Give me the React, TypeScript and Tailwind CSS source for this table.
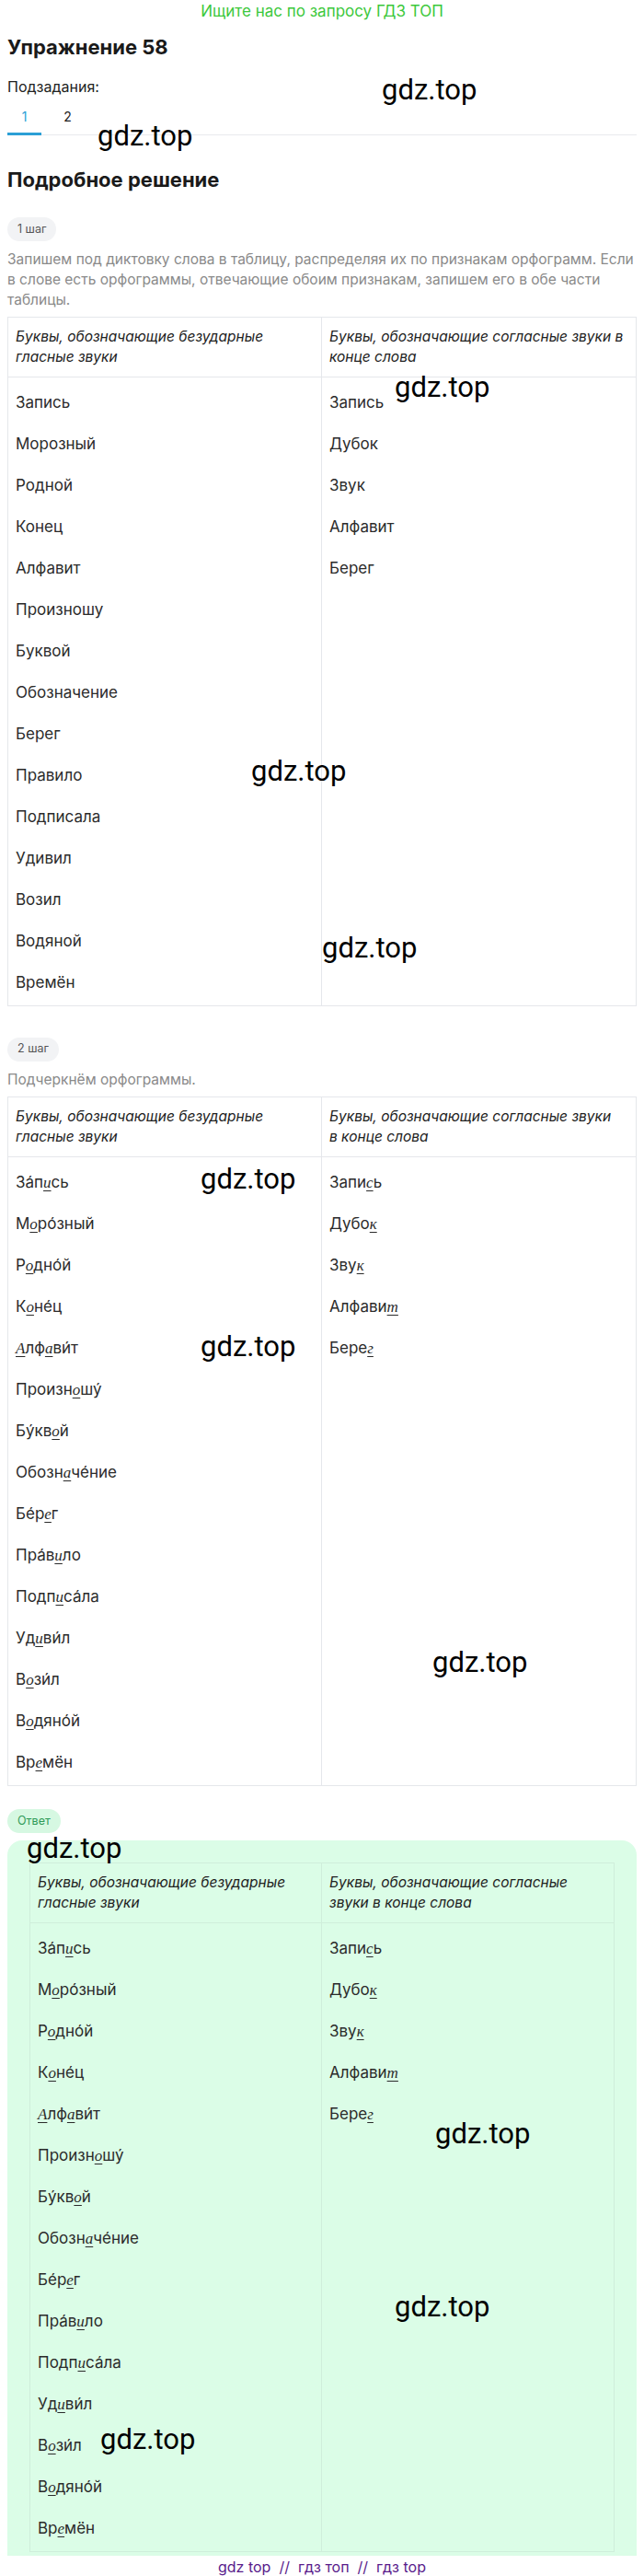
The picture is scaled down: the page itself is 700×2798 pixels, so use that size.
import React from "react";

const sans = "font-['Inter','Noto_Sans',sans-serif]";

// letters in [] are the underlined orthogram letters
const plain1 = [
  "Запись", "Морозный", "Родной", "Конец", "Алфавит", "Произношу", "Буквой", "Обозначение",
  "Берег", "Правило", "Подписала", "Удивил", "Возил", "Водяной", "Времён",
];
const plain2 = ["Запись", "Дубок", "Звук", "Алфавит", "Берег"];

const marked1 = [
  "За́п[и]сь", "М[о]ро́зный", "Р[о]дно́й", "К[о]не́ц", "[А]лф[а]ви́т", "Произн[о]шу́", "Бу́кв[о]й",
  "Обозн[а]че́ние", "Бе́р[е]г", "Пра́в[и]ло", "Подп[и]са́ла", "Уд[и]ви́л", "В[о]зи́л", "В[о]дяно́й", "Вр[е]мён",
];
const marked2 = ["Запи[с]ь", "Дубо[к]", "Зву[к]", "Алфави[т]", "Бере[г]"];

const marks = [
  [415, 82], [106, 132], [429, 405], [273, 822], [350, 1014], [218, 1265],
  [218, 1447], [470, 1790], [29, 1992], [473, 2302], [429, 2490], [109, 2634],
];

function Word({ text }: { text: string }) {
  const parts = text.split(/(\[[^\]]+\])/);
  return (
    <span>
      {parts.map((p, i) =>
        p.startsWith("[") ? (
          <span
            key={i}
            className="font-['Liberation_Serif',serif] italic underline underline-offset-[3px] decoration-1"
          >
            {p.slice(1, -1)}
          </span>
        ) : (
          <span key={i}>{p}</span>
        )
      )}
    </span>
  );
}

function Table({
  head,
  left,
  right,
  line,
}: {
  head: string[][];
  left: string[];
  right: string[];
  line: string;
}) {
  return (
    <div className={`grid grid-cols-2 border ${line}`}>
      {head.map((rows, i) => (
        <div
          key={i}
          className={`px-2 py-[10px] border-b ${line} ${i === 0 ? "border-r" : ""} italic text-[15.5px] leading-[22px] text-[#222]`}
        >
          {rows.map((r) => (
            <div key={r} className="whitespace-nowrap">
              {r}
            </div>
          ))}
        </div>
      ))}
      {[left, right].map((col, i) => (
        <div key={i} className={`px-2 pt-[5px] pb-[2px] ${i === 0 ? `border-r ${line}` : ""}`}>
          {col.map((w) => (
            <div key={w} className="h-[45px] flex items-center text-[17px] text-[#2b2b2b]">
              <Word text={w} />
            </div>
          ))}
        </div>
      ))}
    </div>
  );
}

function Pill({ children, green }: { children: React.ReactNode; green?: boolean }) {
  return (
    <div
      className={`inline-flex h-[26px] items-center rounded-full px-[11px] text-[12.5px] ${
        green ? "bg-[#d6f8e2] text-[#2f9a58]" : "bg-[#f2f3f5] text-[#555]"
      }`}
    >
      {children}
    </div>
  );
}

export default function App() {
  const gray = "border-[#e5e7eb]";
  return (
    <div className={`relative bg-white px-2 ${sans}`}>
      <div className="h-6 text-center text-[17px] leading-6 text-[#3cc83c]">Ищите нас по запросу ГДЗ ТОП</div>

      <h1 className="mt-[13px] text-[22px] font-bold leading-7 text-[#1a1a1a]">Упражнение 58</h1>

      <div className="mt-[19px] text-[16px] leading-5 text-[#222]">Подзадания:</div>
      <div className="flex gap-[10px] border-b border-[#e8eaed]">
        <div className="-mb-px w-[37px] border-b-[3px] border-[#2b9fd6] pt-[13px] pb-[7px] text-center text-[14px] leading-5 text-[#2b9fd6]">
          1
        </div>
        <div className="-mb-px w-[37px] border-b-[3px] border-transparent pt-[13px] pb-[7px] text-center text-[14px] leading-5 text-[#222]">
          2
        </div>
      </div>

      <h2 className="mt-[34px] text-[22px] font-bold leading-7 text-[#1a1a1a]">Подробное решение</h2>

      <div className="mt-[26px]">
        <Pill>1 шаг</Pill>
      </div>
      <p className="mt-[9px] mb-[7px] text-[15.5px] leading-[22px] text-[#8a8a8a]">
        Запишем под диктовку слова в таблицу, распределяя их по признакам орфограмм. Если в слове есть
        орфограммы, отвечающие обоим признакам, запишем его в обе части таблицы.
      </p>
      <Table
        line={gray}
        head={[
          ["Буквы, обозначающие безударные", "гласные звуки"],
          ["Буквы, обозначающие согласные звуки в", "конце слова"],
        ]}
        left={plain1}
        right={plain2}
      />

      <div className="mt-8">
        <Pill>2 шаг</Pill>
      </div>
      <p className="mt-[9px] mb-[7px] text-[15.5px] leading-[22px] text-[#8a8a8a]">Подчеркнём орфограммы.</p>
      <Table
        line={gray}
        head={[
          ["Буквы, обозначающие безударные", "гласные звуки"],
          ["Буквы, обозначающие согласные звуки", "в конце слова"],
        ]}
        left={marked1}
        right={marked2}
      />

      <div className="mt-6">
        <Pill green>Ответ</Pill>
      </div>
      <div className="mt-2 rounded-t-2xl bg-[#dbfde7] px-6 pt-6 pb-1">
        <Table
          line="border-[#cfeedb]"
          head={[
            ["Буквы, обозначающие безударные", "гласные звуки"],
            ["Буквы, обозначающие согласные", "звуки в конце слова"],
          ]}
          left={marked1}
          right={marked2}
        />
      </div>

      <div className="h-6 text-center text-[16px] leading-6 text-[#5a1d8c]">gdz top&nbsp; // &nbsp;гдз топ&nbsp; // &nbsp;гдз top</div>

      {marks.map(([x, y], i) => (
        <div
          key={i}
          className="pointer-events-none absolute font-['Roboto',sans-serif] text-[31px] leading-none text-black"
          style={{ left: x, top: y }}
        >
          gdz.top
        </div>
      ))}
    </div>
  );
}
